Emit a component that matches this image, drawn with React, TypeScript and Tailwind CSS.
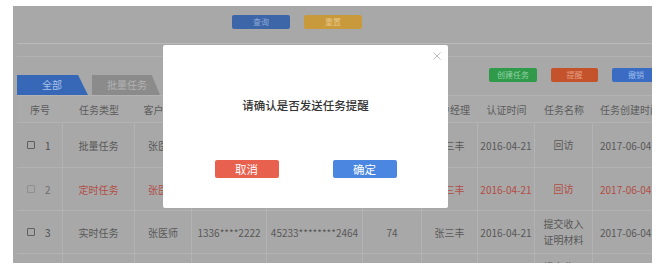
import React from 'react';

type Row = {
  no: number;
  type: string;
  name: string;
  phone: string;
  idNo: string;
  age: string;
  manager: string;
  authDate: string;
  task: string[];
  created: string;
  red?: boolean;
};

const rows: Row[] = [
  { no: 1, type: '批量任务', name: '张医师', phone: '1336****2222', idNo: '45233********2464', age: '74', manager: '张三丰', authDate: '2016-04-21', task: ['回访'], created: '2017-06-04 09:30' },
  { no: 2, type: '定时任务', name: '张医师', phone: '1336****2222', idNo: '45233********2464', age: '74', manager: '张三丰', authDate: '2016-04-21', task: ['回访'], created: '2017-06-04 09:30', red: true },
  { no: 3, type: '实时任务', name: '张医师', phone: '1336****2222', idNo: '45233********2464', age: '74', manager: '张三丰', authDate: '2016-04-21', task: ['提交收入', '证明材料'], created: '2017-06-04 09:30' },
  { no: 4, type: '实时任务', name: '张医师', phone: '1336****2222', idNo: '45233********2464', age: '74', manager: '张三丰', authDate: '2016-04-21', task: ['提交收入', '证明材料'], created: '2017-06-04 09:30' },
];

const heights = ['h-[45px]', 'h-[43px]', 'h-[43px]', 'h-[43px]'];

// column template shared by header and body rows
const cols = 'grid grid-cols-[46px_72px_57px_75px_96px_59px_56px_57px_58px_100px]';

const Cell = ({ children, last }: { children: React.ReactNode; last?: boolean }) => (
  <div className={`flex items-center ${last ? 'justify-start pl-[7px]' : 'justify-center border-r border-[#b3b3b3]'} whitespace-nowrap`}>
    {children}
  </div>
);

const App = () => {
  return (
    <div
      className="w-[661px] h-[271px] bg-white pt-[6px] pl-[13px] overflow-hidden"
      style={{ fontFamily: '"Noto Sans CJK SC", "Noto Sans", sans-serif' }}
    >
      <div className="relative w-[639px] h-[257px] bg-[#a8a8a8] overflow-hidden">
        {/* search buttons */}
        <div className="flex gap-[14px] pl-[219px] pt-[9px]">
          <div className="w-[58px] h-[14px] rounded-[2px] bg-[#3d66a8] text-[#8faad4] text-[8px] leading-[14px] text-center">查询</div>
          <div className="w-[58px] h-[14px] rounded-[2px] bg-[#c99a3c] text-[#e6c585] text-[8px] leading-[14px] text-center">重置</div>
        </div>

        <div className="mt-[14px] ml-[4px] h-px bg-[#bababa]" />
        <div className="mt-[12px] ml-[4px] h-px bg-[#b2b2b2]" />

        {/* tabs + actions */}
        <div className="flex h-[38px] items-start">
          <div className="flex gap-[4px] ml-[4px] mt-[18px] shrink-0">
            <div className="w-[71px] h-[20px] bg-[#3768b8] text-[#a9c1e8] text-[10px] leading-[20px] pl-[25px] [clip-path:polygon(0_0,86%_0,100%_100%,0_100%)]">
              全部
            </div>
            <div className="w-[68px] h-[20px] bg-[#8b8b8b] text-[#b3b3b3] text-[10px] leading-[20px] pl-[15px] [clip-path:polygon(0_0,88%_0,100%_100%,0_100%)]">
              批量任务
            </div>
          </div>
          <div className="flex gap-[14px] ml-[329px] mt-[11px] shrink-0">
            <div className="w-[48px] h-[14px] rounded-[2px] bg-[#2f9a4a] text-[#93d3a6] text-[8px] leading-[14px] text-center">创建任务</div>
            <div className="w-[47px] h-[14px] rounded-[2px] bg-[#c4532c] text-[#e59c82] text-[8px] leading-[14px] text-center">提醒</div>
            <div className="w-[48px] h-[14px] rounded-[2px] bg-[#3a6cc4] text-[#9cbbe9] text-[8px] leading-[14px] text-center">撤销</div>
          </div>
        </div>

        {/* table */}
        <div className="ml-[4px] w-[676px] text-[10px] text-[#585858]">
          <div className={`${cols} h-[28px] border-t border-b border-[#b3b3b3] bg-[#aaaaaa] text-[#5c5c5c]`}>
            {['序号', '任务类型', '客户姓名', '手机号', '身份证号', '年龄', '客户经理', '认证时间', '任务名称'].map((h) => (
              <div key={h} className="flex items-center justify-center whitespace-nowrap">{h}</div>
            ))}
            <div className="flex items-center pl-[7px] whitespace-nowrap">任务创建时间</div>
          </div>
          {rows.map((r, i) => (
            <div
              key={r.no}
              className={`${cols} ${heights[i]} border-b border-[#b3b3b3] ${r.red ? 'text-[#b24d46]' : ''}`}
            >
              <div className="flex items-center pl-[10px] gap-[10px] border-r border-[#b3b3b3]">
                <span className={`w-[8px] h-[8px] rounded-[1px] border ${r.red ? 'border-[#8e8e8e]' : 'border-[#5e5e5e]'}`} />
                <span className={r.red ? 'text-[#6e6e6e]' : 'text-[#4e4e4e]'}>{r.no}</span>
              </div>
              <Cell>{r.type}</Cell>
              <Cell>{r.name}</Cell>
              <Cell>{r.phone}</Cell>
              <Cell>{r.idNo}</Cell>
              <Cell>{r.age}</Cell>
              <Cell>{r.manager}</Cell>
              <Cell>{r.authDate}</Cell>
              <Cell>
                <div className="flex flex-col items-center leading-[16px]">
                  {r.task.map((t) => (
                    <span key={t}>{t}</span>
                  ))}
                </div>
              </Cell>
              <Cell last>{r.created}</Cell>
            </div>
          ))}
        </div>

        {/* confirm dialog */}
        <div className="absolute left-[150px] top-[39px] w-[285px] h-[163px] bg-white rounded-[2px] flex flex-col items-center">
          <svg className="absolute right-[7px] top-[7px]" width="8" height="8" viewBox="0 0 8 8">
            <path d="M0.5 0.5L7.5 7.5M7.5 0.5L0.5 7.5" stroke="#bdbdbd" strokeWidth="1" />
          </svg>
          <div className="mt-[52px] h-[16px] text-[11.5px] leading-[16px] text-[#333333] font-medium">请确认是否发送任务提醒</div>
          <div className="mt-[47px] flex gap-[54px]">
            <div className="w-[64px] h-[18px] rounded-[2px] bg-[#e8604e] text-white text-[11.5px] leading-[18px] text-center">取消</div>
            <div className="w-[64px] h-[18px] rounded-[2px] bg-[#4b87e0] text-white text-[11.5px] leading-[18px] text-center">确定</div>
          </div>
        </div>
      </div>
    </div>
  );
};

export default App;
